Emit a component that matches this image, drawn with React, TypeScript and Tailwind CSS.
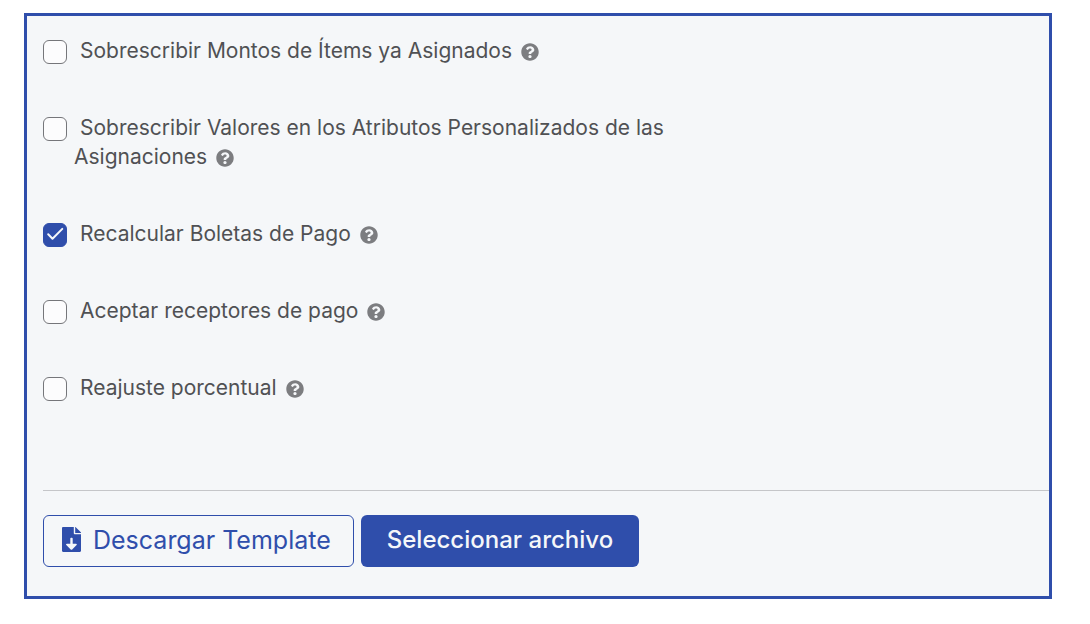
import { useState } from 'react'
import { FaQuestionCircle } from 'react-icons/fa'

const OPTIONS = [
  { id: 'montos', label: 'Sobrescribir Montos de Ítems ya Asignados', checked: false },
  {
    id: 'atributos',
    label: 'Sobrescribir Valores en los Atributos Personalizados de las Asignaciones',
    checked: false,
  },
  { id: 'boletas', label: 'Recalcular Boletas de Pago', checked: true },
  { id: 'receptores', label: 'Aceptar receptores de pago', checked: false },
  { id: 'reajuste', label: 'Reajuste porcentual', checked: false },
]

function Option({ id, label, checked }: { id: string; label: string; checked: boolean }) {
  const [value, setValue] = useState(checked)

  return (
    <div className="flex items-start gap-[7px]">
      <span className="mt-1 grid shrink-0">
        <input
          id={id}
          type="checkbox"
          checked={value}
          onChange={(e) => setValue(e.target.checked)}
          className="peer col-start-1 row-start-1 size-6 appearance-none rounded-md border border-[#75767a] bg-[#fcfcfd] checked:border-[#2f4eab] checked:bg-[#2f4eab]"
        />
        <svg
          viewBox="0 0 24 24"
          fill="none"
          stroke="#f5f7f9"
          strokeWidth="2"
          strokeLinecap="round"
          strokeLinejoin="round"
          className="pointer-events-none invisible col-start-1 row-start-1 size-6 peer-checked:visible"
        >
          <path d="M5.2 11.3l4.300 4.400 9.800-9.800" />
        </svg>
      </span>
      <label htmlFor={id} className="indent-[6px] text-[21px] leading-[29px] text-[#505154]">
        {label} <FaQuestionCircle className="ml-[3px] inline size-[18px] text-[#7c7d80]" />
      </label>
    </div>
  )
}

function FileDownloadIcon() {
  return (
    <svg viewBox="0 0 19 25" fill="currentColor" className="mb-1 h-[25px] w-[19px]">
      <path
        fillRule="evenodd"
        d="M1.2 0h10.6v6.200c0 .6.5 1.100 1.100 1.100H19v16.500c0 .7-.5 1.200-1.200 1.200H1.200C.5 25 0 24.500 0 23.800V1.200C0 .5.5 0 1.200 0zM8.300 11.500v5.200H4.900c-.8 0-1.100.9-.6 1.400l4.400 4.300c.4.400 1.100.4 1.500 0l4.400-4.300c.5-.5.2-1.400-.6-1.400h-3.300v-5.200c0-.5-.4-.8-.8-.8h-.8c-.5 0-.8.3-.8.8z"
      />
      <path d="M13.200 0c.3 0 .6.100.8.400l4.600 4.600c.3.200.4.500.4.800v.2h-5.800z" />
    </svg>
  )
}

export default function App() {
  return (
    <main className="min-h-screen bg-white pt-[13px] pr-[38px] pb-6 pl-6 font-['Inter',sans-serif]">
      <form
        className="border-[3px] border-[#2f4eab] bg-[#f5f7f9] pt-5 pb-[29px] pl-4"
        onSubmit={(e) => e.preventDefault()}
      >
        <div className="flex max-w-[650px] flex-col gap-12">
          {OPTIONS.map((option) => (
            <Option key={option.id} {...option} />
          ))}
        </div>

        <hr className="mt-[88px] border-[#c5c6c9]" />

        <div className="mt-6 flex flex-wrap gap-[7px]">
          <button
            type="button"
            className="flex h-[52px] items-center gap-3 rounded-md border border-[#2f4eab] pr-[22px] pl-[18px] text-[25px] text-[#2f4eab]"
          >
            <FileDownloadIcon />
            Descargar Template
          </button>
          <button
            type="button"
            className="h-[52px] rounded-md bg-[#2f4eab] px-[26px] pb-0.5 text-2xl font-medium text-[#f5f7f9]"
          >
            Seleccionar archivo
          </button>
        </div>
      </form>
    </main>
  )
}
